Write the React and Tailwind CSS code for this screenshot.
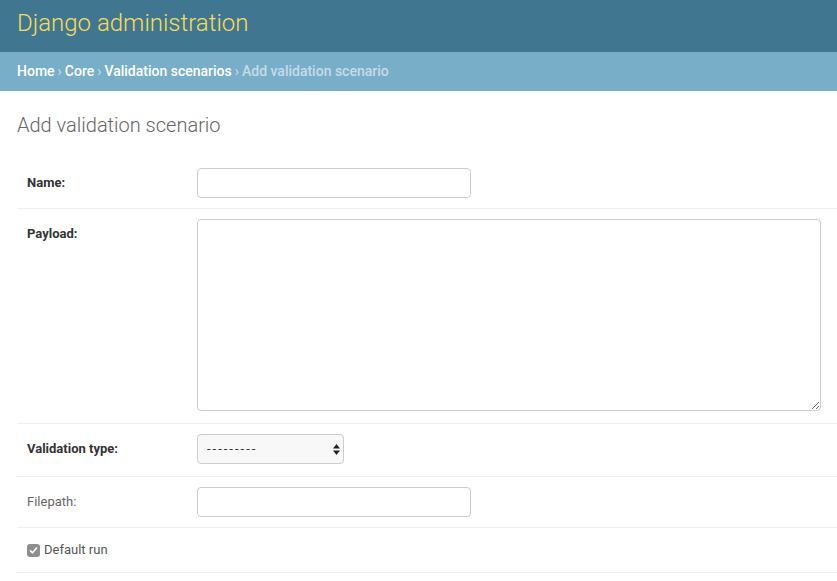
import React from 'react';

const FormRow = ({ label, required, children, className = '' }) => (
    <div className={`flex border-b border-[#eee] px-[10px] ${className}`}>
        <label className={`w-[170px] shrink-0 pt-[7px] pr-[10px] text-[13px] leading-[16px] ${required ? 'font-bold text-[#333]' : 'text-[#666]'}`}>
            {label}
        </label>
        <div className="flex-1">{children}</div>
    </div>
);

const App = () => {
    return (
        <div className="min-h-[581px] bg-white font-['Roboto','Liberation_Sans',sans-serif] text-[#333]">
            {/* Header */}
            <div className="flex h-[52px] items-center bg-[#417690] px-[17px] pb-[7px]">
                <h1 className="text-[24px] font-light leading-[30px] text-[#f5dd5d]">Django administration</h1>
            </div>

            {/* Breadcrumbs */}
            <div className="flex h-[39px] items-center bg-[#79aec8] px-[17px] text-[14px] font-medium text-[#c4dce8]">
                <a className="text-white">Home</a>
                <span className="px-[3px]">›</span>
                <a className="text-white">Core</a>
                <span className="px-[3px]">›</span>
                <a className="text-white">Validation scenarios</a>
                <span className="px-[3px]">›</span>
                <span>Add validation scenario</span>
            </div>

            {/* Content */}
            <div className="pl-[17px]">
                <h2 className="pt-[22px] pb-[21px] text-[20px] font-light leading-[24px] text-[#666]">Add validation scenario</h2>

                <div>
                    <FormRow label="Name:" required className="py-[10px]">
                        <input type="text" className="block h-[30px] w-[274px] rounded-[4px] border border-[#ccc] px-[6px] text-[13px] outline-none" />
                    </FormRow>

                    <FormRow label="Payload:" required className="pt-[10px] pb-[12px]">
                        <textarea className="block h-[192px] w-[624px] rounded-[4px] border border-[#ccc] px-[6px] py-[5px] text-[13px] outline-none" />
                    </FormRow>

                    <FormRow label="Validation type:" required className="pt-[10px] pb-[12px]">
                        <div className="relative w-[147px]">
                            <select className="block h-[30px] w-full appearance-none rounded-[4px] border border-[#ccc] bg-[#f8f8f8] pl-[9px] text-[13px] tracking-[2px] text-[#333] outline-none">
                                <option>---------</option>
                            </select>
                            <svg className="pointer-events-none absolute right-[4px] top-[10px]" width="7" height="11" viewBox="0 0 7 11">
                                <path d="M3.5 0 L7 4.5 L0 4.5 Z" fill="#222" />
                                <path d="M3.5 11 L7 6.5 L0 6.5 Z" fill="#222" />
                            </svg>
                        </div>
                    </FormRow>

                    <FormRow label="Filepath:" className="py-[10px]">
                        <input type="text" className="block h-[30px] w-[274px] rounded-[4px] border border-[#ccc] px-[6px] text-[13px] outline-none" />
                    </FormRow>

                    <div className="flex h-[45px] items-center border-b border-[#eee] px-[10px]">
                        <span className="flex h-[13px] w-[13px] items-center justify-center rounded-[3px] bg-[#8e8e8e]">
                            <svg width="9" height="9" viewBox="0 0 9 9">
                                <path d="M1.5 4.8 L3.6 6.8 L7.5 2" fill="none" stroke="#fff" strokeWidth="1.6" strokeLinecap="round" strokeLinejoin="round" />
                            </svg>
                        </span>
                        <label className="pl-[4px] text-[13px] text-[#555]">Default run</label>
                    </div>
                </div>
            </div>
        </div>
    );
};

export default App;
